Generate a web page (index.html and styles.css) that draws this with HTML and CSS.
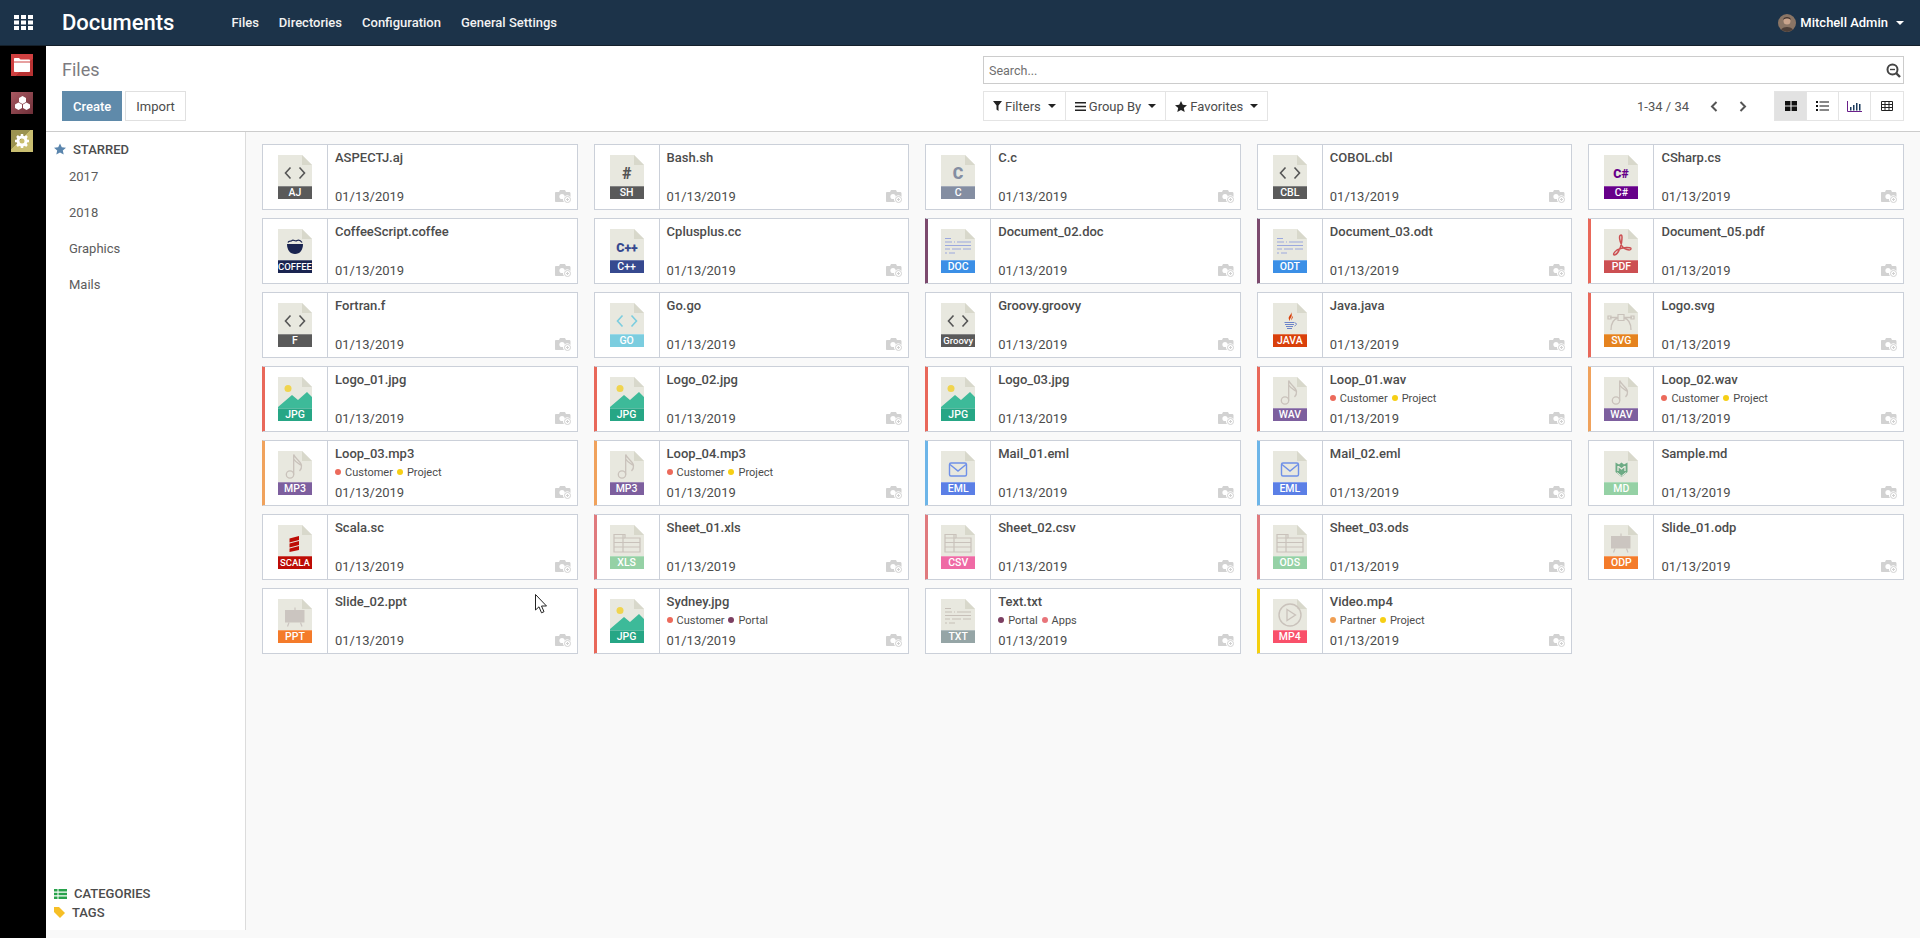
FILE: index.html
```html
<!DOCTYPE html>
<html lang="en">
<head>
    <meta charset="UTF-8">
    <title>Documents</title>
    <link rel="stylesheet" href="styles.css">
</head>
<body>
    <!-- shared icon shapes -->
    <svg class="defs" width="0" height="0">
        <symbol id="paper" viewBox="0 0 34 31">
            <path d="M0 0H24L34 10V31H0Z" fill="#e8e8df"/>
            <path d="M24 0L34 10H24Z" fill="#d8d8cb"/>
        </symbol>
        <symbol id="code" viewBox="0 0 34 31">
            <path d="M12.5 12.5L7.5 18L12.5 23.5M21.5 12.5L26.5 18L21.5 23.5" fill="none" stroke="#555" stroke-width="1.6"/>
        </symbol>
        <symbol id="code-blue" viewBox="0 0 34 31">
            <path d="M12.5 12.5L7.5 18L12.5 23.5M21.5 12.5L26.5 18L21.5 23.5" fill="none" stroke="#7bcddf" stroke-width="1.6"/>
        </symbol>
        <symbol id="coffee" viewBox="0 0 34 31">
            <path d="M9 15H25C25 21 22 25 17 25S9 21 9 15Z" fill="#1a2450"/>
            <path d="M10 13.5C11 11 13 13 14 11.5C15.500 10 17 13 19 11.500C21 10.500 23 12 24 13.500" fill="none" stroke="#1a2450" stroke-width="1.3"/>
        </symbol>
        <symbol id="doc-lines" viewBox="0 0 34 31">
            <path d="M4 9.500H10M4 13H11M13 13H14M16 13H30M4 16.500H30M4 20H9M11 20H20M22 20H30M4 24H6M8 24H14" fill="none" stroke="#9ba8de" stroke-width="1.200"/>
        </symbol>
        <symbol id="txt-lines" viewBox="0 0 34 31">
            <path d="M4 9.500H10M4 13H11M13 13H14M16 13H30M4 16.500H30M4 20H9M11 20H20M22 20H30M4 24H6M8 24H14" fill="none" stroke="#c6bfb8" stroke-width="1.200"/>
        </symbol>
        <symbol id="pdf" viewBox="0 0 34 31">
            <path d="M17 6C14.500 6 15.500 12 18 17C20 20.500 26 22 27 20C27.500 18 19 17.500 13 21C10 23 8.500 26 10.500 26C13 26 16.500 20 17.500 14C18 10 18.500 6 17 6Z" fill="none" stroke="#cc4f52" stroke-width="1.500"/>
        </symbol>
        <symbol id="java" viewBox="0 0 34 31">
            <path d="M18 9C19 12 14.500 13 16 16.500C16.500 17.500 17 18 17 18C16 15.500 20.500 14 18 9ZM20 13C19 14 18 15 18.500 17.500C19 15.500 20 15 20 13Z" fill="#d9400b"/>
            <path d="M11.500 19.500H21.500M12 21.500H21M13 23.500H20M14 25.500H19M22 20C24 20 24 22 21.500 23" fill="none" stroke="#6b82c8" stroke-width="1"/>
        </symbol>
        <symbol id="bezier" viewBox="0 0 34 31">
            <path d="M7 27C7 20 10 16 14 15M27 27C27 20 24 16 20 15M6 14.500H14M20 14.500H28" fill="none" stroke="#c9c2bb" stroke-width="1.300"/>
            <path d="M14 11.500H20V17.500H14ZM4 13H7V16H4ZM27 13H30V16H27Z" fill="none" stroke="#c9c2bb" stroke-width="1.200"/>
        </symbol>
        <symbol id="image" viewBox="0 0 34 31">
            <circle cx="10" cy="11.500" r="3.500" fill="#f0d44f"/>
            <path d="M0 30L14 18L20 23L29 15L34 20V31H0Z" fill="#3dba99"/>
        </symbol>
        <symbol id="music" viewBox="0 0 34 31">
            <circle cx="12" cy="23.500" r="3.700" fill="none" stroke="#c9c2bb" stroke-width="1.300"/>
            <path d="M15.700 23.500V3.500C17 8 23 10 23.500 14.500C23.800 17 22.500 19 21.500 20M15.700 8C18 12 22 13 23.500 14.500" fill="none" stroke="#c9c2bb" stroke-width="1.300"/>
        </symbol>
        <symbol id="mail" viewBox="0 0 34 31">
            <rect x="8.500" y="12" width="17" height="13" rx="1.500" fill="none" stroke="#6f90e8" stroke-width="1.400"/>
            <path d="M9 13.500L17 20L25 13.500" fill="none" stroke="#6f90e8" stroke-width="1.400"/>
        </symbol>
        <symbol id="markdown" viewBox="0 0 34 31">
            <path d="M11.500 11.500L15 13.500L17.500 11.500L20 13.500L23.500 11.500V21L17.500 26L11.500 21Z" fill="#6dab85"/>
            <path d="M14 15V20M21 15V20M14.500 15.500L17.500 18L20.500 15.500" fill="none" stroke="#e8e8df" stroke-width="1.300"/>
            <path d="M13 21.500L17.500 25L22 21.500" fill="none" stroke="#e8e8df" stroke-width="1"/>
        </symbol>
        <symbol id="scala" viewBox="0 0 34 31">
            <path d="M11.500 13.500L21 11V15L11.500 17.500ZM11.500 18.500L21 16V20L11.500 22.500ZM11.500 23.500L21 21V25L11.500 27Z" fill="#bd0c05"/>
        </symbol>
        <symbol id="sheet" viewBox="0 0 34 31">
            <path d="M4 9.500H15V13H30V27H4Z" fill="none" stroke="#c9c2bb" stroke-width="1.200"/>
            <path d="M4 13H15M4 17.500H30M4 22H30M13 9.500V27" fill="none" stroke="#c9c2bb" stroke-width="1.200"/>
        </symbol>
        <symbol id="slide" viewBox="0 0 34 31">
            <rect x="7" y="11" width="19.500" height="12.500" fill="#cbc5c0"/>
            <path d="M17 8.500V11M11 23.500L9.500 27.500M22.500 23.500L24 27.500" fill="none" stroke="#cbc5c0" stroke-width="1.200"/>
        </symbol>
        <symbol id="play" viewBox="0 0 34 31">
            <circle cx="17" cy="16" r="11" fill="none" stroke="#c9c2bb" stroke-width="1.400"/>
            <path d="M14 10.500L22.500 16L14 21.500Z" fill="none" stroke="#c9c2bb" stroke-width="1.300"/>
        </symbol>
        <symbol id="camera" viewBox="0 0 16 14">
            <path d="M1 3H4L5 1H10L11 3H14C15 3 15.500 3.500 15.500 4.500V8A4 4 0 0 0 9 13H1C.4 13 0 12.600 0 12V4C0 3.500.4 3 1 3Z" fill="#d2d2d2"/>
            <circle cx="7" cy="7.500" r="2.600" fill="#fff"/>
            <circle cx="12.500" cy="10.500" r="3" fill="#fff" stroke="#d2d2d2"/>
            <path d="M12.500 9V12M11 10.500H14" stroke="#d2d2d2"/>
        </symbol>
    </svg>

    <header class="navbar">
        <svg class="apps-icon" width="19" height="15" viewBox="0 0 19 15" fill="#fff">
            <path d="M0 0H5V4H0ZM7 0H12V4H7ZM14 0H19V4H14ZM0 5.500H5V9.500H0ZM7 5.500H12V9.500H7ZM14 5.500H19V9.500H14ZM0 11H5V15H0ZM7 11H12V15H7ZM14 11H19V15H14Z"/>
        </svg>
        <span class="brand">Documents</span>
        <nav class="menu">
            <a>Files</a>
            <a>Directories</a>
            <a>Configuration</a>
            <a>General Settings</a>
        </nav>
        <div class="user">
            <svg class="avatar" width="18" height="18" viewBox="0 0 18 18">
                <circle cx="9" cy="9" r="9" fill="#8a7565"/>
                <circle cx="9" cy="7" r="3.500" fill="#c9a48c"/>
                <path d="M3 16C4 12 14 12 15 16L9 18Z" fill="#4e4039"/>
                <path d="M5 6C5 2 13 2 13 6C11 4 7 4 5 6Z" fill="#443630"/>
            </svg>
            <span>Mitchell Admin</span>
            <span class="caret"></span>
        </div>
    </header>

    <div class="layout">
        <aside class="rail">
            <div class="rail-app red">
                <svg width="16" height="14" viewBox="0 0 16 14" fill="#fff"><path d="M0 1C0 .4.4 0 1 0H5L6.500 1.500H15C15.600 1.500 16 2 16 2.500V3.500H0ZM0 4.500H16V13C16 13.600 15.600 14 15 14H1C.4 14 0 13.600 0 13Z"/></svg>
            </div>
            <div class="rail-app maroon">
                <svg width="15" height="14" viewBox="0 0 15 14" fill="#fff"><path d="M7.500 0L11 2V6L7.500 8L4 6V2ZM3.500 6.500L7 8.500V12L3.500 14L0 12V8.500ZM11.500 6.500L15 8.500V12L11.500 14L8 12V8.500Z"/></svg>
            </div>
            <div class="rail-app olive">
                <svg width="14" height="14" viewBox="0 0 14 14"><circle cx="7" cy="7" r="4" fill="none" stroke="#fff" stroke-width="3"/><path d="M7 0V3M7 11V14M0 7H3M11 7H14M2 2L4 4M10 10L12 12M12 2L10 4M4 10L2 12" stroke="#fff" stroke-width="2.500"/></svg>
            </div>
        </aside>

        <main class="main">
            <section class="control-panel">
                <div class="cp-left">
                    <h1 class="page-title">Files</h1>
                    <div class="cp-buttons">
                        <button class="btn btn-primary">Create</button>
                        <button class="btn">Import</button>
                    </div>
                </div>
                <div class="cp-right">
                    <div class="search">
                        <span>Search...</span>
                        <svg width="15" height="15" viewBox="0 0 15 15"><circle cx="6.500" cy="6.500" r="5" fill="none" stroke="#444" stroke-width="2"/><path d="M10 10L14 14" stroke="#444" stroke-width="2.400"/><path d="M4 6.500H9" stroke="#444" stroke-width="1.400"/></svg>
                    </div>
                    <div class="toolbar">
                        <div class="filters">
                            <button class="filter-btn">
                                <svg width="9" height="10" viewBox="0 0 9 10" fill="#222"><path d="M0 0H9L5.500 4.500V10L3.500 8.500V4.500Z"/></svg>
                                Filters <span class="caret dark"></span>
                            </button>
                            <button class="filter-btn">
                                <svg width="11" height="9" viewBox="0 0 11 9" fill="#222"><path d="M0 0H11V1.400H0ZM0 3.800H11V5.200H0ZM0 7.600H11V9H0Z"/></svg>
                                Group By <span class="caret dark"></span>
                            </button>
                            <button class="filter-btn">
                                <svg width="12" height="11" viewBox="0 0 12 11" fill="#222"><path d="M6 0L7.800 3.800L12 4.200L8.800 7L9.700 11L6 8.900L2.300 11L3.200 7L0 4.200L4.200 3.800Z"/></svg>
                                Favorites <span class="caret dark"></span>
                            </button>
                        </div>
                        <div class="pager">
                            <span>1-34 / 34</span>
                            <svg width="8" height="11" viewBox="0 0 8 11"><path d="M6.500 1L2 5.500L6.500 10" fill="none" stroke="#555" stroke-width="2"/></svg>
                            <svg width="8" height="11" viewBox="0 0 8 11"><path d="M1.500 1L6 5.500L1.500 10" fill="none" stroke="#555" stroke-width="2"/></svg>
                        </div>
                        <div class="views">
                            <button class="view-btn active"><svg width="12" height="10" viewBox="0 0 12 10" fill="#111"><path d="M0 0H5.400V4.400H0ZM6.600 0H12V4.400H6.600ZM0 5.600H5.400V10H0ZM6.600 5.600H12V10H6.600Z"/></svg></button>
                            <button class="view-btn"><svg width="13" height="10" viewBox="0 0 13 10" fill="#111"><path d="M0 0H2V2H0ZM3.500 .4H13V1.600H3.500ZM0 4H2V6H0ZM3.500 4.400H13V5.600H3.500ZM0 8H2V10H0ZM3.500 8.400H13V9.600H3.500Z"/></svg></button>
                            <button class="view-btn"><svg width="15" height="11" viewBox="0 0 15 11"><path d="M.5 0V10.500H15" fill="none" stroke="#6a1f8a"/><path d="M3 6H4.500V9.500H3ZM6 4H7.500V9.500H6ZM9 2H10.500V9.500H9ZM12 3H13.500V9.500H12Z" fill="#1b3a5c"/></svg></button>
                            <button class="view-btn"><svg width="12" height="10" viewBox="0 0 12 10"><path d="M.5.5H11.500V9.500H.5ZM.5 3.500H11.500M.5 6.500H11.500M4 .5V9.500M8 .5V9.500" fill="none" stroke="#222"/></svg></button>
                        </div>
                    </div>
                </div>
            </section>

            <div class="body">
                <aside class="sidebar">
                    <div class="side-head">
                        <svg width="12" height="12" viewBox="0 0 12 11" fill="#5a85ad"><path d="M6 0L7.800 3.800L12 4.200L8.800 7L9.700 11L6 8.900L2.300 11L3.200 7L0 4.200L4.200 3.800Z"/></svg>
                        STARRED
                    </div>
                    <a class="side-item">2017</a>
                    <a class="side-item">2018</a>
                    <a class="side-item">Graphics</a>
                    <a class="side-item">Mails</a>
                    <div class="side-bottom">
                        <div class="side-head small">
                            <svg width="13" height="10" viewBox="0 0 13 10" fill="#28a24b"><path d="M0 0H3.500V2.600H0ZM4.500 0H13V2.600H4.500ZM0 3.700H3.500V6.300H0ZM4.500 3.700H13V6.300H4.500ZM0 7.400H3.500V10H0ZM4.500 7.400H13V10H4.500Z"/></svg>
                            CATEGORIES
                        </div>
                        <div class="side-head small">
                            <svg width="11" height="11" viewBox="0 0 11 11" fill="#f6bf26"><path d="M0 0H5L11 6L6 11L0 5Z"/></svg>
                            TAGS
                        </div>
                    </div>
                </aside>

                <section class="grid">
                    <article class="card">
                        <div class="thumb"><div class="file"><svg class="art"><use href="#paper"/><use href="#code"/></svg><span class="band gray">AJ</span></div></div>
                        <div class="info"><div class="name">ASPECTJ.aj</div><div class="foot"><span>01/13/2019</span><svg class="cam"><use href="#camera"/></svg></div></div>
                    </article>
                    <article class="card">
                        <div class="thumb"><div class="file"><svg class="art"><use href="#paper"/><text x="17" y="24" class="glyph big" fill="#555">#</text></svg><span class="band gray">SH</span></div></div>
                        <div class="info"><div class="name">Bash.sh</div><div class="foot"><span>01/13/2019</span><svg class="cam"><use href="#camera"/></svg></div></div>
                    </article>
                    <article class="card">
                        <div class="thumb"><div class="file"><svg class="art"><use href="#paper"/><text x="17" y="24" class="glyph big" fill="#848ea2">C</text></svg><span class="band slate">C</span></div></div>
                        <div class="info"><div class="name">C.c</div><div class="foot"><span>01/13/2019</span><svg class="cam"><use href="#camera"/></svg></div></div>
                    </article>
                    <article class="card">
                        <div class="thumb"><div class="file"><svg class="art"><use href="#paper"/><use href="#code"/></svg><span class="band gray">CBL</span></div></div>
                        <div class="info"><div class="name">COBOL.cbl</div><div class="foot"><span>01/13/2019</span><svg class="cam"><use href="#camera"/></svg></div></div>
                    </article>
                    <article class="card">
                        <div class="thumb"><div class="file"><svg class="art"><use href="#paper"/><text x="17" y="23" class="glyph" fill="#67008a">C#</text></svg><span class="band violet">C#</span></div></div>
                        <div class="info"><div class="name">CSharp.cs</div><div class="foot"><span>01/13/2019</span><svg class="cam"><use href="#camera"/></svg></div></div>
                    </article>

                    <article class="card">
                        <div class="thumb"><div class="file"><svg class="art"><use href="#paper"/><use href="#coffee"/></svg><span class="band navy tight">COFFEE</span></div></div>
                        <div class="info"><div class="name">CoffeeScript.coffee</div><div class="foot"><span>01/13/2019</span><svg class="cam"><use href="#camera"/></svg></div></div>
                    </article>
                    <article class="card">
                        <div class="thumb"><div class="file"><svg class="art"><use href="#paper"/><text x="17" y="23" class="glyph" fill="#36498f">C++</text></svg><span class="band indigo">C++</span></div></div>
                        <div class="info"><div class="name">Cplusplus.cc</div><div class="foot"><span>01/13/2019</span><svg class="cam"><use href="#camera"/></svg></div></div>
                    </article>
                    <article class="card stripe-plum">
                        <div class="thumb"><div class="file"><svg class="art"><use href="#paper"/><use href="#doc-lines"/></svg><span class="band blue">DOC</span></div></div>
                        <div class="info"><div class="name">Document_02.doc</div><div class="foot"><span>01/13/2019</span><svg class="cam"><use href="#camera"/></svg></div></div>
                    </article>
                    <article class="card stripe-plum">
                        <div class="thumb"><div class="file"><svg class="art"><use href="#paper"/><use href="#doc-lines"/></svg><span class="band blue">ODT</span></div></div>
                        <div class="info"><div class="name">Document_03.odt</div><div class="foot"><span>01/13/2019</span><svg class="cam"><use href="#camera"/></svg></div></div>
                    </article>
                    <article class="card stripe-red">
                        <div class="thumb"><div class="file"><svg class="art"><use href="#paper"/><use href="#pdf"/></svg><span class="band pdf">PDF</span></div></div>
                        <div class="info"><div class="name">Document_05.pdf</div><div class="foot"><span>01/13/2019</span><svg class="cam"><use href="#camera"/></svg></div></div>
                    </article>

                    <article class="card">
                        <div class="thumb"><div class="file"><svg class="art"><use href="#paper"/><use href="#code"/></svg><span class="band gray">F</span></div></div>
                        <div class="info"><div class="name">Fortran.f</div><div class="foot"><span>01/13/2019</span><svg class="cam"><use href="#camera"/></svg></div></div>
                    </article>
                    <article class="card">
                        <div class="thumb"><div class="file"><svg class="art"><use href="#paper"/><use href="#code-blue"/></svg><span class="band sky">GO</span></div></div>
                        <div class="info"><div class="name">Go.go</div><div class="foot"><span>01/13/2019</span><svg class="cam"><use href="#camera"/></svg></div></div>
                    </article>
                    <article class="card">
                        <div class="thumb"><div class="file"><svg class="art"><use href="#paper"/><use href="#code"/></svg><span class="band gray tight">Groovy</span></div></div>
                        <div class="info"><div class="name">Groovy.groovy</div><div class="foot"><span>01/13/2019</span><svg class="cam"><use href="#camera"/></svg></div></div>
                    </article>
                    <article class="card">
                        <div class="thumb"><div class="file"><svg class="art"><use href="#paper"/><use href="#java"/></svg><span class="band java">JAVA</span></div></div>
                        <div class="info"><div class="name">Java.java</div><div class="foot"><span>01/13/2019</span><svg class="cam"><use href="#camera"/></svg></div></div>
                    </article>
                    <article class="card stripe-red">
                        <div class="thumb"><div class="file"><svg class="art"><use href="#paper"/><use href="#bezier"/></svg><span class="band amber">SVG</span></div></div>
                        <div class="info"><div class="name">Logo.svg</div><div class="foot"><span>01/13/2019</span><svg class="cam"><use href="#camera"/></svg></div></div>
                    </article>

                    <article class="card stripe-red">
                        <div class="thumb"><div class="file"><svg class="art"><use href="#paper"/><use href="#image"/></svg><span class="band teal">JPG</span></div></div>
                        <div class="info"><div class="name">Logo_01.jpg</div><div class="foot"><span>01/13/2019</span><svg class="cam"><use href="#camera"/></svg></div></div>
                    </article>
                    <article class="card stripe-red">
                        <div class="thumb"><div class="file"><svg class="art"><use href="#paper"/><use href="#image"/></svg><span class="band teal">JPG</span></div></div>
                        <div class="info"><div class="name">Logo_02.jpg</div><div class="foot"><span>01/13/2019</span><svg class="cam"><use href="#camera"/></svg></div></div>
                    </article>
                    <article class="card stripe-red">
                        <div class="thumb"><div class="file"><svg class="art"><use href="#paper"/><use href="#image"/></svg><span class="band teal">JPG</span></div></div>
                        <div class="info"><div class="name">Logo_03.jpg</div><div class="foot"><span>01/13/2019</span><svg class="cam"><use href="#camera"/></svg></div></div>
                    </article>
                    <article class="card stripe-red">
                        <div class="thumb"><div class="file"><svg class="art"><use href="#paper"/><use href="#music"/></svg><span class="band purple">WAV</span></div></div>
                        <div class="info"><div class="name">Loop_01.wav</div><div class="tags"><i class="dot red"></i>Customer<i class="dot yellow"></i>Project</div><div class="foot"><span>01/13/2019</span><svg class="cam"><use href="#camera"/></svg></div></div>
                    </article>
                    <article class="card stripe-orange">
                        <div class="thumb"><div class="file"><svg class="art"><use href="#paper"/><use href="#music"/></svg><span class="band purple">WAV</span></div></div>
                        <div class="info"><div class="name">Loop_02.wav</div><div class="tags"><i class="dot red"></i>Customer<i class="dot yellow"></i>Project</div><div class="foot"><span>01/13/2019</span><svg class="cam"><use href="#camera"/></svg></div></div>
                    </article>

                    <article class="card stripe-orange">
                        <div class="thumb"><div class="file"><svg class="art"><use href="#paper"/><use href="#music"/></svg><span class="band purple">MP3</span></div></div>
                        <div class="info"><div class="name">Loop_03.mp3</div><div class="tags"><i class="dot red"></i>Customer<i class="dot yellow"></i>Project</div><div class="foot"><span>01/13/2019</span><svg class="cam"><use href="#camera"/></svg></div></div>
                    </article>
                    <article class="card stripe-orange">
                        <div class="thumb"><div class="file"><svg class="art"><use href="#paper"/><use href="#music"/></svg><span class="band purple">MP3</span></div></div>
                        <div class="info"><div class="name">Loop_04.mp3</div><div class="tags"><i class="dot red"></i>Customer<i class="dot yellow"></i>Project</div><div class="foot"><span>01/13/2019</span><svg class="cam"><use href="#camera"/></svg></div></div>
                    </article>
                    <article class="card stripe-blue">
                        <div class="thumb"><div class="file"><svg class="art"><use href="#paper"/><use href="#mail"/></svg><span class="band periwinkle">EML</span></div></div>
                        <div class="info"><div class="name">Mail_01.eml</div><div class="foot"><span>01/13/2019</span><svg class="cam"><use href="#camera"/></svg></div></div>
                    </article>
                    <article class="card stripe-blue">
                        <div class="thumb"><div class="file"><svg class="art"><use href="#paper"/><use href="#mail"/></svg><span class="band periwinkle">EML</span></div></div>
                        <div class="info"><div class="name">Mail_02.eml</div><div class="foot"><span>01/13/2019</span><svg class="cam"><use href="#camera"/></svg></div></div>
                    </article>
                    <article class="card">
                        <div class="thumb"><div class="file"><svg class="art"><use href="#paper"/><use href="#markdown"/></svg><span class="band mint">MD</span></div></div>
                        <div class="info"><div class="name">Sample.md</div><div class="foot"><span>01/13/2019</span><svg class="cam"><use href="#camera"/></svg></div></div>
                    </article>

                    <article class="card">
                        <div class="thumb"><div class="file"><svg class="art"><use href="#paper"/><use href="#scala"/></svg><span class="band crimson tight">SCALA</span></div></div>
                        <div class="info"><div class="name">Scala.sc</div><div class="foot"><span>01/13/2019</span><svg class="cam"><use href="#camera"/></svg></div></div>
                    </article>
                    <article class="card stripe-rose">
                        <div class="thumb"><div class="file"><svg class="art"><use href="#paper"/><use href="#sheet"/></svg><span class="band mint">XLS</span></div></div>
                        <div class="info"><div class="name">Sheet_01.xls</div><div class="foot"><span>01/13/2019</span><svg class="cam"><use href="#camera"/></svg></div></div>
                    </article>
                    <article class="card stripe-rose">
                        <div class="thumb"><div class="file"><svg class="art"><use href="#paper"/><use href="#sheet"/></svg><span class="band pink">CSV</span></div></div>
                        <div class="info"><div class="name">Sheet_02.csv</div><div class="foot"><span>01/13/2019</span><svg class="cam"><use href="#camera"/></svg></div></div>
                    </article>
                    <article class="card stripe-rose">
                        <div class="thumb"><div class="file"><svg class="art"><use href="#paper"/><use href="#sheet"/></svg><span class="band mint">ODS</span></div></div>
                        <div class="info"><div class="name">Sheet_03.ods</div><div class="foot"><span>01/13/2019</span><svg class="cam"><use href="#camera"/></svg></div></div>
                    </article>
                    <article class="card">
                        <div class="thumb"><div class="file"><svg class="art"><use href="#paper"/><use href="#slide"/></svg><span class="band tangerine">ODP</span></div></div>
                        <div class="info"><div class="name">Slide_01.odp</div><div class="foot"><span>01/13/2019</span><svg class="cam"><use href="#camera"/></svg></div></div>
                    </article>

                    <article class="card">
                        <div class="thumb"><div class="file"><svg class="art"><use href="#paper"/><use href="#slide"/></svg><span class="band tangerine">PPT</span></div></div>
                        <div class="info"><div class="name">Slide_02.ppt</div><div class="foot"><span>01/13/2019</span><svg class="cam"><use href="#camera"/></svg></div></div>
                    </article>
                    <article class="card stripe-red">
                        <div class="thumb"><div class="file"><svg class="art"><use href="#paper"/><use href="#image"/></svg><span class="band teal">JPG</span></div></div>
                        <div class="info"><div class="name">Sydney.jpg</div><div class="tags"><i class="dot red"></i>Customer<i class="dot plum"></i>Portal</div><div class="foot"><span>01/13/2019</span><svg class="cam"><use href="#camera"/></svg></div></div>
                    </article>
                    <article class="card">
                        <div class="thumb"><div class="file"><svg class="art"><use href="#paper"/><use href="#txt-lines"/></svg><span class="band ash">TXT</span></div></div>
                        <div class="info"><div class="name">Text.txt</div><div class="tags"><i class="dot plum"></i>Portal<i class="dot rose"></i>Apps</div><div class="foot"><span>01/13/2019</span><svg class="cam"><use href="#camera"/></svg></div></div>
                    </article>
                    <article class="card stripe-yellow">
                        <div class="thumb"><div class="file"><svg class="art"><use href="#paper"/><use href="#play"/></svg><span class="band coral">MP4</span></div></div>
                        <div class="info"><div class="name">Video.mp4</div><div class="tags"><i class="dot orange"></i>Partner<i class="dot yellow"></i>Project</div><div class="foot"><span>01/13/2019</span><svg class="cam"><use href="#camera"/></svg></div></div>
                    </article>
                </section>
            </div>
        </main>
    </div>

    <svg class="cursor" width="13" height="20" viewBox="0 0 13 20"><path d="M.5.5V16L4 12.800L6.500 18.800L9 17.700L6.500 12H11.500Z" fill="#fff" stroke="#222"/></svg>
</body>
</html>
```

FILE: styles.css
```css
* {
    box-sizing: border-box;
}

html, body {
    height: 100%;
}

body {
    display: flex;
    flex-direction: column;
    height: 100vh;
    margin: 0;
    overflow: hidden;
    background-color: #f9f9f9;
    font-family: Roboto, 'Liberation Sans', sans-serif;
    font-size: 13px;
    color: #4c4c4c;
}

.defs {
    position: absolute;
}

/* top bar */
.navbar {
    display: flex;
    align-items: center;
    flex: none;
    height: 46px;
    padding-left: 14px;
    background-color: #1c3349;
    border-bottom: 1px solid #14202b;
    color: #fff;
}

.apps-icon {
    flex: none;
    margin-top: -1px;
}

.brand {
    margin-left: 29px;
    font-size: 22px;
    font-weight: 500;
}

.menu {
    display: flex;
    gap: 20px;
    margin-left: 57px;
}

.menu a {
    color: #f2f2f2;
    font-weight: 500;
}

.user {
    display: flex;
    align-items: center;
    gap: 4px;
    margin-left: auto;
    padding-right: 16px;
    font-weight: 500;
}

.caret {
    display: inline-block;
    margin-left: 4px;
    border-top: 4px solid #fff;
    border-left: 4px solid transparent;
    border-right: 4px solid transparent;
}

.caret.dark {
    border-top-color: #222;
}

/* app rail */
.layout {
    display: flex;
    flex: 1;
    min-height: 0;
}

.rail {
    display: flex;
    flex-direction: column;
    flex: none;
    gap: 16px;
    width: 46px;
    padding: 8px 0 0 11px;
    background-color: #000;
}

.rail-app {
    display: flex;
    align-items: center;
    justify-content: center;
    width: 22px;
    height: 22px;
}

.rail-app.red {
    background: linear-gradient(135deg, #cf4040 60%, #b83232 60%);
}

.rail-app.maroon {
    background: linear-gradient(135deg, #a85a62, #6e2f38);
}

.rail-app.olive {
    background: linear-gradient(135deg, #9b9350 45%, #c9be70 45%);
}

/* control panel */
.main {
    display: flex;
    flex-direction: column;
    flex: 1;
    min-width: 0;
}

.control-panel {
    display: flex;
    justify-content: space-between;
    flex: none;
    height: 86px;
    padding: 10px 16px 0;
    background-color: #fff;
    border-bottom: 1px solid #ccc;
}

.page-title {
    margin: 0 0 7px;
    font-size: 18px;
    font-weight: 400;
    line-height: 28px;
    color: #7d7b80;
}

.cp-buttons {
    display: flex;
    gap: 3px;
}

.btn {
    height: 30px;
    padding: 0 10px;
    border: 1px solid #e0e0e0;
    border-radius: 0;
    background-color: #fff;
    color: #4c4c4c;
    font: 13px Roboto, sans-serif;
}

.btn-primary {
    border-color: #5f8aaa;
    background-color: #5f8aaa;
    color: #fff;
    font-weight: 500;
}

.cp-right {
    display: flex;
    flex-direction: column;
    gap: 7px;
    width: 921px;
}

.search {
    display: flex;
    align-items: center;
    justify-content: space-between;
    height: 28px;
    padding: 0 2px 0 5px;
    border: 1px solid #ccc;
    color: #6f6f6f;
    font-size: 12.5px;
}

.toolbar {
    display: flex;
    align-items: center;
    height: 30px;
}

.filters {
    display: flex;
    height: 30px;
    border: 1px solid #e4e4e4;
}

.filter-btn {
    display: flex;
    align-items: center;
    gap: 3px;
    padding: 0 9px;
    border: none;
    border-right: 1px solid #e4e4e4;
    background: none;
    color: #4c4c4c;
    font: 13px Roboto, sans-serif;
}

.filter-btn:last-child {
    border-right: none;
}

.pager {
    display: flex;
    align-items: center;
    gap: 0;
    margin-left: auto;
    color: #555;
}

.pager svg {
    margin-left: 21px;
}

.views {
    display: flex;
    height: 30px;
    margin-left: 27px;
    border: 1px solid #e4e4e4;
}

.view-btn {
    display: flex;
    align-items: center;
    justify-content: center;
    width: 32px;
    padding: 0;
    border: none;
    border-right: 1px solid #e4e4e4;
    background: none;
}

.view-btn:last-child {
    border-right: none;
}

.view-btn.active {
    background-color: #e2e2e2;
}

/* sidebar */
.body {
    display: flex;
    flex: 1;
    min-height: 0;
}

.sidebar {
    display: flex;
    flex-direction: column;
    flex: none;
    width: 200px;
    margin-bottom: 8px;
    padding-top: 8px;
    background-color: #fff;
    border-right: 1px solid #dcdcdc;
}

.side-head {
    display: flex;
    align-items: center;
    gap: 7px;
    height: 18px;
    margin-bottom: 1px;
    padding-left: 8px;
    font-weight: 500;
    color: #4c4c4c;
}

.side-item {
    padding-left: 23px;
    line-height: 36px;
    color: #5c5c5c;
}

.side-bottom {
    margin-top: auto;
    padding-bottom: 8px;
}

.side-bottom .side-head {
    height: 19px;
    margin-bottom: 0;
}

/* card grid */
.grid {
    display: grid;
    grid-template-columns: repeat(5, 1fr);
    grid-auto-rows: 66px;
    align-content: start;
    gap: 8px 16px;
    flex: 1;
    padding: 12px 16px;
}

.card {
    display: flex;
    min-width: 0;
    background-color: #fff;
    border: 1px solid #cbd0d9;
    border-left-color: var(--stripe, #cbd0d9);
}

.stripe-red { --stripe: #e9685a; }
.stripe-orange { --stripe: #f0a25c; }
.stripe-plum { --stripe: #7c4a6e; }
.stripe-blue { --stripe: #6db5e8; }
.stripe-rose { --stripe: #e07a7e; }
.stripe-yellow { --stripe: #f4cf0f; }

.thumb {
    display: flex;
    align-items: center;
    justify-content: center;
    flex: none;
    width: 65px;
    border-right: 1px solid #cbd0d9;
    box-shadow: inset 2px 0 0 var(--stripe, transparent);
}

.file {
    display: flex;
    flex-direction: column;
    width: 34px;
    height: 44px;
}

.art {
    display: block;
    flex: none;
    width: 34px;
    height: 31px;
}

.art use {
    width: 34px;
    height: 31px;
}

.glyph {
    font-family: Roboto, sans-serif;
    font-size: 12.5px;
    font-weight: 900;
    text-anchor: middle;
}

.glyph.big {
    font-size: 16px;
}

.band {
    height: 13px;
    border-top: 1px solid rgba(255, 255, 255, 0.25);
    color: #fff;
    font-size: 10.5px;
    font-weight: 500;
    line-height: 12px;
    text-align: center;
}

.band.tight {
    font-size: 9.5px;
}

.gray { background-color: #5a5a5a; }
.slate { background-color: #848ea2; }
.violet { background-color: #67008a; }
.navy { background-color: #1a2450; }
.indigo { background-color: #36498f; }
.blue { background-color: #3b8fe6; }
.pdf { background-color: #cc4f52; }
.sky { background-color: #7bcddf; }
.java { background-color: #d9400b; }
.amber { background-color: #e5831f; }
.teal { background-color: #26a685; }
.purple { background-color: #7d5f9e; }
.periwinkle { background-color: #5b7fe6; }
.mint { background-color: #95d1a5; }
.crimson { background-color: #bd0c05; }
.pink { background-color: #ef6aa5; }
.tangerine { background-color: #f47b2a; }
.ash { background-color: #95a5a6; }
.coral { background-color: #f9506a; }

.info {
    display: flex;
    flex-direction: column;
    flex: 1;
    min-width: 0;
    padding: 4px 6px 4px 7px;
}

.name {
    font-weight: 500;
    line-height: 18px;
}

.tags {
    display: flex;
    align-items: center;
    height: 14px;
    margin-top: 2px;
    font-size: 11px;
}

.dot {
    width: 6px;
    height: 6px;
    margin-right: 4px;
    border-radius: 50%;
}

.dot + .dot,
.tags .dot:not(:first-child) {
    margin-left: 4px;
}

.dot.red { background-color: #ec6a5b; }
.dot.yellow { background-color: #f6cf15; }
.dot.plum { background-color: #7c3f62; }
.dot.rose { background-color: #e8747a; }
.dot.orange { background-color: #f09f53; }

.foot {
    display: flex;
    align-items: center;
    justify-content: space-between;
    height: 18px;
    margin-top: auto;
}

.cam {
    width: 16px;
    height: 14px;
}

/* mouse pointer captured in the shot */
.cursor {
    position: absolute;
    left: 535px;
    top: 594px;
}
```
